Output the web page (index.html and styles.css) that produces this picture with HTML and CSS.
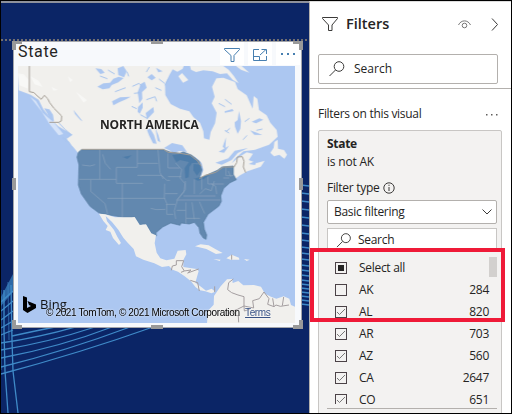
FILE: index.html
```html
<!DOCTYPE html>
<html lang="en">
<head>
<meta charset="utf-8">
<title>State filters</title>
<link rel="stylesheet" href="styles.css">
</head>
<body>
<main class="app">
  <section class="canvas">
    <svg class="waves" viewBox="1 2 308 411" aria-hidden="true">
      <path d="M1 297L13 274V292L1 306Z" fill="#3c85c2" opacity=".7"/>
      <g fill="none" stroke="#3f8ac8" stroke-width="1.3">
        <path d="M1 302L13 291M1 311L13 301M1 320L13 311M1 328L13 321M1 335L13 330M12 336Q35 331 55 327M1 343Q40 337 75 327M1 350Q50 342 95 327M1 358Q60 347 112 327M1 367Q66 351 130 327M1 374Q80 353 153 327"/>
        <path d="M4 290L4 330L5 371L8 413M11 285L12 340L13 371L18 413"/>
        <path d="M1 290V370M8 282L9 340" opacity=".5"/>
        <path d="M301 185l8 1M301 193l8 1M301 201l8 1M301 209l8 1M301 217l8 1M301 225l8 1M301 233l8 1M301 240l8 1M301 247l8 1M301 253l8 1M301 259l8 1M301 265l8 1M301 270l8 1M301 275l8 1M301 280l8 1M301 284l8 1M301 288l8 1M301 292l8 1M301 296l8 1M301 300l8 1M301 304l8 1"/>
      </g>
    </svg>
    <article class="visual">
      <header class="visual-head">
        <h1>State</h1>
        <div class="tools">
          <span><svg width="24" height="23" viewBox="220 42 24 23"><path d="M224.5 48.500h15v1l-5.500 6v6h-3v-6l-6.500-6z"/></svg></span>
          <span><svg width="24" height="23" viewBox="248 42 24 23"><path d="M259 49.500h-5.500v11h13V56M253.500 56.500h6v4M260 55l6-5.500M261.500 49.500h5v4.500"/></svg></span>
          <span><svg width="24" height="23" viewBox="276 42 24 23"><path class="dots" d="M281 53h2v2h-2zM287 53h2v2h-2zM293 53h2v2h-2z"/></svg></span>
        </div>
      </header>
      <div class="map">
        <svg class="map-art" viewBox="18 66 277 257" role="img" aria-label="Map of North America">
          <defs>
            <filter id="soft" x="-5%" y="-5%" width="110%" height="110%"><feGaussianBlur stdDeviation="1"/></filter>
          </defs>
          <g transform="translate(10 60) scale(.33333)" filter="url(#soft)">
            <path fill="#f1f0ed" d="M20 0H528L518 26 502 35 488 28 478 45 465 72 466 105 482 132 510 146 538 154 550 171 570 188 580 214 582 235 598 239 602 216 615 190 620 158 605 130 614 110 606 80 619 55 640 53 675 66 683 87 710 106 728 146 731 108 742 116 747 150 770 166 781 188 800 210 803 230 777 254 735 269 700 274 674 296 665 310 686 292 710 277 729 281 716 300 740 309 764 302 752 320 712 334 690 346 672 359H560L470 300 205 280 170 236 188 224 145 199 128 183 100 148 86 119 62 104 26 91Z"/>
            <path fill="#f1f0ed" d="M505 49L516 39 535 60 519 68ZM540 18H640L656 29 671 47 686 70 668 59 651 40 630 42 608 34 580 31 558 36 543 29ZM678 18H695L718 38 693 29ZM781 278L791 263 793 246 803 239 804 266 822 270 831 284 823 296 808 284 792 289ZM172 238L195 250 211 274 188 259Z"/>
            <g fill="#acc7f1">
              <path d="M256 25L274 27 284 38 271 42ZM262 80L280 70 300 68 310 56 326 50 341 54 325 67 305 75 298 85 278 88 269 83ZM323 25L340 18 350 34 342 52 325 45ZM306 124L330 112 362 110 348 118 327 127 310 136ZM383 97L392 72 404 65 410 83 396 96 397 116 388 130ZM412 52L425 42 437 53 425 61ZM438 23L458 34 445 37ZM384 141L398 127 398 143 389 161 383 155ZM407 159L430 141 432 156 411 178ZM411 210L420 205 432 225 440 251 429 250 417 226ZM436 204L445 225 451 247 443 242ZM462 264L486 249 517 256 531 276 508 273 492 279 475 269ZM531 284L555 291 575 309 580 330 571 352 564 326 546 305Z"/>
              <path d="M102 145L118 148 129 164 132 184 121 181 111 159ZM190 149L218 184 211 180 195 162ZM644 154L667 147 671 153 644 158ZM674 187L683 180 687 153 693 183 691 206 683 221 675 200ZM725 185L748 175 760 179 738 190ZM720 211L743 219 757 225 733 224ZM638 260L648 232 646 267ZM626 275L657 257 642 278ZM616 308L655 295 674 272 714 264 683 279 665 300 635 314ZM716 312L742 300 735 315Z"/>
            </g>
            <g fill="none" stroke="#a7c4ed" stroke-width="3">
              <path d="M294 30l20 12M351 35l5 14M367 79l20-9 9 10M372 100l18-2M409 119l26-9 5 14M447 57l17 13M436 83l18 8M391 164l22 12M409 36l9-15M475 56l-10 20M365 139l15 7M315 95l32-12M270 48l22 8M645 118l20 15M660 205l-13 10M626 130l19 10M704 185l14-10M644 211l13 8M699 239l12-13M757 207l-18 4M145 187l20 21 20 17M160 233l20 16"/>
            </g>
            <path fill="#fff" opacity=".5" d="M24 40L42 43 56 60 54 86 28 76ZM61 48L86 62 98 81 73 73ZM173 49L189 60 180 67ZM124 80L145 90 130 92ZM196 94L231 120 221 128ZM60 110L78 123 98 158 132 188 160 222 146 226 119 193 94 154Z"/>
            <path fill="#6288af" stroke="#52789d" stroke-width="2" d="M205 277L214 269H461L480 276 509 280 520 276 544 285 568 304 576 330 568 356 597 342 622 331 636 321 670 318 670 343 679 359 660 368 641 385 632 408 634 424 627 438 594 463 580 487 583 508 590 525 588 538 580 534 570 520 567 503 553 487 538 492 513 489 510 496 482 489 458 501 438 518 439 528 424 524 408 494 398 492 392 498 374 472H340L286 463 267 459 240 439 214 402 205 375 207 315 201 292Z"/>
            <path fill="#4577a7" opacity=".7" d="M487 286L515 281 544 286 558 298 565 308 546 309 538 321 536 352 526 355 524 324 537 306 510 300 499 307ZM551 312L569 314 573 331 561 347 550 331ZM552 356L580 349 598 346 581 357 564 362ZM339 291L365 286 352 297Z"/>
            <g fill="none" stroke="#91a8c1" stroke-width="1.7">
              <path d="M269 270V358M207 358H319M319 322V370H399M319 322H382V270M382 310H444M382 346H455L470 361H480M242 359V394L285 431 293 463M337 370V472M292 415H465M464 371L463 413 470 430V463H490M444 270L450 338 460 357M474 280L474 324H509M474 350H514M465 401H503M468 433H496M497 309L515 329 510 354 525 371 522 396 503 418 493 452 497 477M526 363V389L515 402 503 417M553 358V402M575 353V389M498 420H632M520 408H617M528 427V491M546 427L553 478M500 451H527M529 475H570M568 425L584 461M569 402L586 386 604 392 613 363M594 350V372H642M603 371L617 379 620 402M648 322V347H671M639 354H658M655 333L662 350M422 445L439 449 466 448M216 315L240 318 255 314M278 283L286 310 302 328"/>
            </g>
            <path fill="none" stroke="#a49e95" stroke-width="3" d="M58 18V95L72 98 82 108 94 118 103 106 113 116 119 128 132 145 155 168 154 183 146 187H118M215 268H461L474 277 510 280 540 285 563 303 574 319M568 356L585 346 617 337 640 321H672L680 308 682 291 697 290 702 304 700 321 707 338"/>
          </g>
          <g transform="translate(10 190) scale(.33333)" filter="url(#soft)">
            <path fill="#f1f0ed" d="M267 71L286 73 315 82H365L374 81 389 105 408 103 424 130 438 136 434 160 440 188 451 205 469 211 493 206 503 182 527 180 529 193 520 210 520 231 560 237 566 243 556 278 573 290 588 302 605 296 616 305 604 310 586 304 570 301 557 292 543 274 523 258 504 245 488 239 477 228 456 231 433 220 400 209 378 199 371 177 353 158 340 143 325 119 306 96 287 78 291 94 312 120 322 140 333 159 327 165 309 144 301 125 287 120 293 108 280 93ZM591 400L594 362 611 344 612 318 632 289 651 268 667 267 668 279 685 273 700 286 732 285 753 290 765 311 783 320 799 326 821 319 838 326 843 345 855 350V400Z"/>
            <path fill="#f1f0ed" d="M555 169L572 163 596 166 617 178 638 189 618 192 589 177ZM649 205L665 194 687 203 688 209H662ZM610 207L632 209 629 213ZM702 207L719 209 710 213Z"/>
            <path fill="none" stroke="#a49ea0" stroke-width="3" d="M484 241L487 228 499 225V212H521L515 230 523 243 513 247M523 243L543 240 533 249 566 237M541 271L563 278 568 303M614 306V289M665 194V209M670 267L656 278 653 299 665 308 684 315 702 320V348L682 358 664 365 673 376 685 377 686 397M702 348L731 354 728 332 748 326 762 306 777 326 773 343 792 350 798 345 811 349 837 345M792 350L788 325M817 347L821 321M702 348L703 363 719 358"/>
          </g>
        </svg>
        <span class="continent">NORTH AMERICA</span>
        <div class="bing"><svg width="13" height="18" viewBox="0 0 13 18"><path d="M0 0l4 1.500V12l4-2-2-1-1.500-4L13 8.500V12l-8.500 5L0 14z"/></svg><span>Bing</span></div>
        <p class="credit">© 2021 TomTom, © 2021 Microsoft Corporation <a>Terms</a></p>
      </div>
      <i class="handle nw"></i><i class="handle n"></i><i class="handle ne"></i><i class="handle w"></i><i class="handle e"></i><i class="handle sw"></i><i class="handle s"></i><i class="handle se"></i>
    </article>
  </section>
  <aside class="panel">
    <header class="panel-head">
      <svg width="17" height="16" viewBox="0 0 17 16"><path d="M.5 1.500h15v1L10 9v5.500H6.500V9l-6-6.500z"/></svg>
      <h2>Filters</h2>
      <svg class="eye" width="13" height="9" viewBox="0 0 13 9"><path d="M.5 5C3-.5 10-.5 12.500 5"/><circle cx="6.500" cy="5.500" r="2.300"/></svg>
      <svg class="next" width="8" height="13" viewBox="0 0 8 13"><path d="M1 .5l5.500 6L1 12.500"/></svg>
    </header>
    <div class="search main-search"><svg width="16" height="16" viewBox="0 0 16 16"><circle cx="10" cy="5.500" r="4.800"/><path d="M6.500 9L.5 15"/></svg><span>Search</span></div>
    <div class="section-head"><span>Filters on this visual</span><svg width="12" height="3" viewBox="0 0 12 3"><path class="dots" d="M0 1h1.500v1.500H0zM5 1h1.500v1.500H5zM10 1h1.500v1.500H10z"/></svg></div>
    <section class="card">
      <h3>State</h3>
      <p class="condition">is not AK</p>
      <div class="type"><span>Filter type</span><svg width="12" height="12" viewBox="0 0 12 12"><circle cx="6" cy="6" r="5.200"/><path d="M6 5v4M6 2.700v1.200"/></svg></div>
      <div class="select"><span>Basic filtering</span><svg width="10" height="6" viewBox="0 0 10 6"><path d="M.5.5L5 5 9.500.5"/></svg></div>
      <div class="search small-search"><svg width="16" height="15" viewBox="0 0 16 16"><circle cx="10" cy="5.500" r="4.800"/><path d="M6.500 9L.5 15"/></svg><span>Search</span></div>
      <div class="list">
        <ul>
          <li><i class="box partial"></i><span>Select all</span></li>
          <li><i class="box"></i><span>AK</span><b>284</b></li>
          <li><i class="box"><svg viewBox="0 0 10 10"><path d="M1 5l2.500 2.500L9 2"/></svg></i><span>AL</span><b>820</b></li>
          <li><i class="box"><svg viewBox="0 0 10 10"><path d="M1 5l2.500 2.500L9 2"/></svg></i><span>AR</span><b>703</b></li>
          <li><i class="box"><svg viewBox="0 0 10 10"><path d="M1 5l2.500 2.500L9 2"/></svg></i><span>AZ</span><b>560</b></li>
          <li><i class="box"><svg viewBox="0 0 10 10"><path d="M1 5l2.500 2.500L9 2"/></svg></i><span>CA</span><b>2647</b></li>
          <li><i class="box"><svg viewBox="0 0 10 10"><path d="M1 5l2.500 2.500L9 2"/></svg></i><span>CO</span><b>651</b></li>
        </ul>
        <i class="scroll"></i>
      </div>
      <hr>
    </section>
  </aside>
  <div class="callout"></div>
</main>
</body>
</html>
```

FILE: styles.css
```css
* { box-sizing: border-box; }
body { margin: 0; background: #000; overflow: hidden; }
h1, h2, h3, p, ul { margin: 0; padding: 0; }
ul { list-style: none; }
svg { display: block; fill: none; stroke: #3b3a39; flex: none; }
svg .dots { stroke: none; fill: #605e5c; }

.app {
  position: relative;
  display: grid;
  grid-template-columns: 308px 202px;
  width: 512px;
  height: 414px;
  padding: 1px;
  font: 12px/16px "Open Sans", "Noto Sans", sans-serif;
  color: #252423;
}
.canvas {
  position: relative;
  height: 412px;
  padding: 39px 0 0 12px;
  border-top: 2px solid #8e929c;
  background: #0b2566;
  overflow: hidden;
}
.canvas::before {
  content: "";
  position: absolute;
  left: 0;
  right: 1px;
  top: 36px;
  height: 2px;
  background: repeating-linear-gradient(90deg, #716e70 0 2px, transparent 2px 4px);
}
.waves { position: absolute; left: 0; top: -1px; width: 308px; height: 411px; stroke: none; }

.visual {
  position: relative;
  width: 289px;
  height: 287px;
  margin-top: -1px;
  padding: 0 4px;
  border: 1px solid #a3a5aa;
  background: #f7f9fc;
}
.visual-head { display: flex; justify-content: space-between; height: 24px; }
.visual-head h1 { padding-top: 1px; font: 400 16px/18px Roboto, sans-serif; letter-spacing: .65px; }
.tools { display: flex; gap: 4px; margin-right: -3px; }
.tools span { height: 23px; background: #fff; }
.tools svg { stroke: #477fb0; }
.tools .dots { fill: #477fb0; }

.map { position: relative; width: 277px; height: 257px; overflow: hidden; background: #acc7f1; }
.map-art { width: 277px; height: 257px; stroke: none; }
.continent {
  position: absolute;
  left: 82px;
  top: 51px;
  white-space: nowrap;
  font: 700 12px/16px "Open Sans", sans-serif;
  letter-spacing: -.15px;
  text-shadow: 0 0 2px #fff;
}
.bing { position: absolute; left: 5px; top: 230px; display: flex; gap: 4px; font-size: 13px; line-height: 16px; color: #111; }
.bing svg { fill: #000; stroke: none; }
.credit {
  position: absolute;
  left: 28px;
  top: 240px;
  white-space: nowrap;
  font: 10px/14px "Liberation Sans", sans-serif;
  letter-spacing: -.36px;
  color: #000;
  text-shadow: 0 0 2px #fff;
}
.credit a { margin-left: 3px; color: #385286; text-decoration: underline; }

.handle { position: absolute; background: #999; }
.nw, .ne, .sw, .se { width: 10px; height: 9px; background: none; border: 0 solid #999; }
.nw { left: -2px; top: -1px; border-width: 3px 0 0 4px; }
.ne { right: -2px; top: -1px; border-width: 3px 4px 0 0; }
.sw { left: -2px; bottom: -2px; border-width: 0 0 4px 4px; }
.se { right: -2px; bottom: -2px; border-width: 0 4px 4px 0; }
.n, .s { left: 137px; width: 12px; height: 4px; }
.n { top: -1px; height: 3px; }
.s { bottom: -2px; }
.w, .e { top: 136px; width: 4px; height: 12px; }
.w { left: -2px; }
.e { right: -2px; }

.panel {
  height: 412px;
  border-left: 1px solid #b3b0ad;
  border-top: 1px solid #ddd;
  background: #fff;
  overflow: hidden;
}
.panel-head { display: flex; align-items: center; height: 44px; padding: 0 12px; }
.panel-head h2 { margin-left: 7px; font-size: 14.5px; font-weight: 600; }
.eye { margin-left: auto; stroke: #777; }
.next { margin-left: 20px; }
.search { display: flex; align-items: center; background: #fff; border: 1px solid #b3b0ad; }
.main-search { width: 180px; height: 30px; margin: 8px 0 0 8px; padding-left: 10px; gap: 9px; border-radius: 2px; }
.section-head {
  display: flex;
  align-items: center;
  justify-content: space-between;
  height: 42px;
  margin-top: 4px;
  padding: 9px 13px 0 8px;
  border-top: 1px solid #b3b0ad;
  letter-spacing: -.3px;
}
.card {
  width: 184px;
  height: 290px;
  margin-left: 8px;
  padding: 5px 4px 0 8px;
  border: 1px solid #c8c6c4;
  border-radius: 2px;
  background: #f3f2f1;
}
.card h3 { font-size: 12px; line-height: 16px; font-weight: 700; letter-spacing: -.3px; }
.condition { margin-top: 2px; letter-spacing: -.2px; }
.type { display: flex; align-items: center; gap: 4px; height: 16px; margin-top: 10px; letter-spacing: -.3px; }
.select {
  display: flex;
  align-items: center;
  justify-content: space-between;
  height: 24px;
  margin-top: 4px;
  padding: 0 4px 0 6px;
  border: 1px solid #b3b0ad;
  border-radius: 2px;
  background: #fff;
  letter-spacing: -.3px;
}
.small-search { height: 24px; margin-top: 4px; padding-left: 8px; gap: 6px; border-color: #c8c6c4; letter-spacing: -.3px; }
.list { display: flex; justify-content: space-between; height: 147px; margin-top: 5px; overflow: hidden; }
.list ul { width: 162px; }
.list li { display: flex; align-items: center; height: 22px; padding-left: 8px; }
.list li span { margin-left: 12px; letter-spacing: -.3px; }
.list li b { margin-left: auto; font-weight: 400; letter-spacing: -.3px; }
.box { display: block; width: 12px; height: 12px; border: 1px solid #4b4247; }
.box svg { width: 10px; height: 10px; stroke: #777; }
.partial { padding: 2px; background: #252423 content-box; }
.scroll { width: 8px; height: 21px; margin-top: -1px; background: #d2d0ce; }
.card hr { height: 1px; margin: 4px 0 0; border: 0; background: #b3b0ad; }

.callout { position: absolute; left: 310px; top: 248px; width: 195px; height: 74px; border: 4px solid #ef1a38; }
```
